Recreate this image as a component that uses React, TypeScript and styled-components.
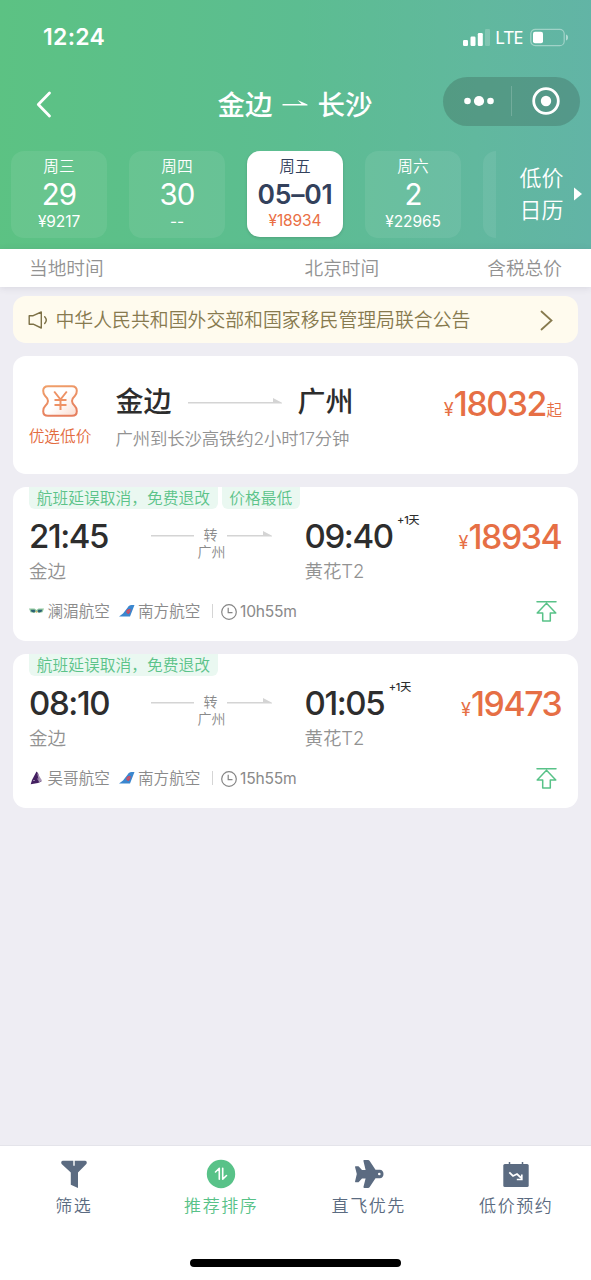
import React from 'react';
import styled, { createGlobalStyle, css } from 'styled-components';

const GlobalStyle = createGlobalStyle`
  *, *::before, *::after { box-sizing: border-box; }
  body {
    margin: 0;
    background: #eeedf3;
    font-family: Inter, "Noto Sans CJK SC", sans-serif;
    color: #2d2d2d;
  }
  svg { display: block; flex: none; }
`;

const Screen = styled.div`
  width: 591px;
  height: 1280px;
  display: flex;
  flex-direction: column;
  overflow: hidden;
  background: #eeedf3;
  white-space: nowrap;
`;

/* ---------- header ---------- */

const Header = styled.header`
  height: 249px;
  flex: none;
  background: linear-gradient(92deg, #5cc283 0%, #5cbd91 50%, #61b89e 80%, #62b4a6 100%);
  color: #fff;
`;

const StatusBar = styled.div`
  height: 74px;
  padding: 0 23px 0 43px;
  display: flex;
  align-items: center;
  justify-content: space-between;
`;

const Clock = styled.span`
  font-size: 23px;
  font-weight: 600;
  line-height: 28px;
  letter-spacing: 0.3px;
`;

const StatusIcons = styled.div`
  display: flex;
  align-items: center;
`;

const Network = styled.span`
  width: 29px;
  margin: 0 6px 0 5px;
  font-family: "Noto Sans", sans-serif;
  font-size: 18.2px;
  font-weight: 450;
  line-height: 24px;
  letter-spacing: -0.5px;
`;

const NavBar = styled.div`
  height: 77px;
  display: grid;
  grid-template-columns: 217.5px 1fr 148px;
  align-items: start;
`;

const BackSlot = styled.div`
  padding: 17px 0 0 36px;
`;

const NavTitle = styled.h1`
  margin: 11px 0 0;
  display: flex;
  align-items: center;
  gap: 9.5px;
  font-size: 27.5px;
  font-weight: 500;
  line-height: 40px;
`;

const Capsule = styled.div`
  width: 137px;
  height: 49px;
  margin-top: 2.5px;
  border-radius: 25px;
  background: rgba(50, 80, 70, 0.28);
  display: grid;
  grid-template-columns: 1fr 1px 1fr;
  align-items: center;
  justify-items: center;
`;

const DotsSlot = styled.span`
  margin-left: 4px;
`;

const CapsuleRule = styled.span`
  width: 1px;
  height: 30px;
  background: rgba(255, 255, 255, 0.18);
`;

const DateStrip = styled.div`
  height: 98px;
  padding-left: 11px;
  display: flex;
`;

const DateList = styled.div`
  width: 485px;
  flex: none;
  overflow: hidden;
  display: flex;
  gap: 22px;
`;

const DateCard = styled.div<{ $active?: boolean }>`
  width: 96px;
  height: 87px;
  flex: none;
  border-radius: 13px;
  background: rgba(255, 255, 255, 0.075);
  display: flex;
  flex-direction: column;
  align-items: center;
  ${(p) =>
    p.$active &&
    css`
      height: 86px;
      background: #fff;
      color: #33415c;
      box-shadow: 0 1px 3px rgba(0, 0, 0, 0.15);
    `}
`;

const Weekday = styled.span`
  margin-top: 5px;
  font-size: 15.7px;
  font-weight: 350;
  line-height: 22px;
`;

const DayNumber = styled.span<{ $active?: boolean }>`
  font-size: ${(p) => (p.$active ? '26.5px' : '29.5px')};
  font-weight: ${(p) => (p.$active ? 570 : 370)};
  line-height: 33px;
  letter-spacing: ${(p) => (p.$active ? '-0.2px' : '-0.8px')};
`;

const DayPrice = styled.span<{ $active?: boolean }>`
  font-size: 15.5px;
  line-height: 20px;
  letter-spacing: -0.1px;
  color: ${(p) => (p.$active ? '#ea6f45' : 'inherit')};
  margin-top: ${(p) => (p.$active ? '0' : '1px')};
`;

const CalendarLink = styled.div`
  flex: 1;
  display: flex;
  align-items: center;
  gap: 10px;
  height: 86px;
  padding-left: 23.5px;
  font-size: 22px;
  font-weight: 350;
  line-height: 32px;
`;

/* ---------- list heading ---------- */

const ColumnHeads = styled.div`
  height: 38px;
  flex: none;
  padding: 1px 29px 0;
  background: #fff;
  box-shadow: 0 1px 7px rgba(60, 60, 90, 0.12);
  display: grid;
  grid-template-columns: 275.5px 1fr auto;
  align-items: center;
  font-size: 18.7px;
  line-height: 36px;
  font-weight: 350;
  color: #929292;
`;

const List = styled.main`
  flex: 1;
  padding: 9px 13px 0;
  display: flex;
  flex-direction: column;
  gap: 13px;
`;

const Notice = styled.div`
  height: 47px;
  flex: none;
  padding: 1px 25px 0 15px;
  border-radius: 13px;
  background: #fffbee;
  color: #877a4e;
  display: flex;
  align-items: center;
`;

const NoticeText = styled.span`
  flex: 1;
  margin-left: 7.5px;
  padding-top: 1px;
  font-size: 18.87px;
  font-weight: 350;
  line-height: 28px;
`;

const cardBase = css`
  flex: none;
  border-radius: 13px;
  background: #fff;
`;

/* ---------- recommended deal ---------- */

const DealCard = styled.section`
  ${cardBase}
  height: 118px;
  padding: 27px 16px 0;
  display: grid;
  grid-template-columns: 86.5px 1fr auto;
  align-items: start;
`;

const DealBadge = styled.div`
  width: 62px;
  padding-top: 2px;
  display: flex;
  flex-direction: column;
  align-items: center;
  gap: 9px;
  font-size: 15.7px;
  font-weight: 350;
  line-height: 22px;
  color: #e36b40;
`;

const DealRoute = styled.div`
  display: flex;
  align-items: center;
  gap: 16px;
  font-size: 28px;
  font-weight: 500;
  line-height: 38px;
`;

const DealNote = styled.div`
  margin-top: 6px;
  font-size: 17.4px;
  font-weight: 350;
  line-height: 24px;
  letter-spacing: -0.15px;
  color: #929292;
`;

const Price = styled.div`
  display: flex;
  align-items: baseline;
  justify-content: flex-end;
  color: #e66f45;
  font-size: 18px;
  line-height: 42px;
`;

const Amount = styled.span`
  font-size: 33.8px;
  font-weight: 550;
  letter-spacing: -1.4px;
  margin-right: 0.6px;
`;

const PriceSuffix = styled.span`
  font-size: 15.5px;
  font-weight: 350;
`;

/* ---------- flights ---------- */

const FlightCard = styled.section`
  ${cardBase}
  height: 154px;
  padding: 0 16px;
`;

const Tags = styled.div`
  height: 22px;
  display: flex;
  gap: 4px;
`;

const Tag = styled.span`
  height: 22px;
  padding: 0 7.7px;
  border-radius: 0 0 6px 6px;
  background: #eaf8f1;
  color: #5bc389;
  font-size: 15.75px;
  font-weight: 350;
  line-height: 23px;
`;

const FlightRow = styled.div`
  height: 76px;
  padding-top: 7px;
  display: grid;
  grid-template-columns: 122px 153.5px 1fr auto;
  align-items: start;
`;

const TimeLine = styled.div`
  display: flex;
  align-items: flex-start;
  gap: 4.5px;
`;

const Time = styled.span`
  font-size: 33px;
  font-weight: 540;
  line-height: 40px;
  letter-spacing: -1.4px;
`;

const NextDay = styled.sup`
  font-size: 11px;
  font-weight: 500;
  line-height: 16px;
  letter-spacing: -0.2px;
  margin-top: -4px;
`;

const Place = styled.div`
  margin-top: 2px;
  font-size: 18.5px;
  font-weight: 350;
  line-height: 26px;
  letter-spacing: -0.1px;
  color: #929292;
`;

const Transfer = styled.div`
  width: 121px;
  padding-top: 10px;
  display: flex;
  flex-direction: column;
  align-items: center;
  font-size: 14px;
  line-height: 17px;
  font-weight: 350;
  color: #8a8a8a;
`;

const TransferLine = styled.div`
  width: 100%;
  display: flex;
  align-items: center;
  justify-content: space-between;
`;

const FlightPrice = styled(Price)`
  margin-top: -0.5px;
`;

const FlightFoot = styled.div`
  height: 52px;
  padding: 1px 5px 0 0;
  display: flex;
  align-items: center;
  font-size: 15.6px;
  font-weight: 350;
  line-height: 24px;
  color: #8a8a8a;
`;

const Airline = styled.span`
  display: flex;
  align-items: center;
  gap: 3.5px;
  width: 89.5px;
`;

const Duration = styled.span`
  flex: 1;
  display: flex;
  align-items: center;
  gap: 3px;
  padding-left: 8px;
  font-weight: 380;
  letter-spacing: -0.2px;
`;

const FootRule = styled.span`
  width: 1px;
  height: 14px;
  margin: 0 0 2px 4px;
  background: #d5d5d5;
`;

/* ---------- bottom bar ---------- */

const BottomBar = styled.nav`
  height: 135px;
  flex: none;
  border-top: 1px solid #e4e4ea;
  background: #fff;
  display: flex;
  flex-direction: column;
  align-items: center;
  justify-content: space-between;
  padding-bottom: 13px;
`;

const TabRow = styled.div`
  width: 100%;
  padding-right: 1px;
  display: grid;
  grid-template-columns: repeat(4, 1fr);
`;

const Tab = styled.div<{ $active?: boolean }>`
  padding-top: 13px;
  display: flex;
  flex-direction: column;
  align-items: center;
  gap: 4px;
  font-size: 17px;
  font-weight: 350;
  line-height: 26px;
  letter-spacing: 1.6px;
  color: ${(p) => (p.$active ? '#58c288' : '#5b6b81')};
`;

const HomeIndicator = styled.div`
  width: 211px;
  height: 8px;
  border-radius: 4px;
  background: #000;
`;

/* ---------- drawings ---------- */

const SignalIcon = () => (
  <svg width="27" height="17" viewBox="0 0 27 17" fill="#fff">
    <rect x="0" y="11" width="5" height="6" rx="1.2" />
    <rect x="7.5" y="7.5" width="5" height="9.5" rx="1.2" />
    <rect x="14.8" y="4" width="5" height="13" rx="1.2" />
    <rect x="22" y="0" width="5" height="17" rx="1.2" opacity="0.2" />
  </svg>
);

const BatteryIcon = () => (
  <svg width="38" height="19" viewBox="0 0 38 19">
    <rect x="0.8" y="1.3" width="33.4" height="16.4" rx="4.5" fill="none" stroke="#fff" strokeOpacity="0.4" strokeWidth="1.2" />
    <rect x="3" y="3.8" width="10" height="11.4" rx="2" fill="#fff" />
    <path d="M36 6.5c1.6.6 2 1.7 2 3s-.4 2.4-2 3z" fill="#fff" opacity="0.5" />
  </svg>
);

const BackIcon = () => (
  <svg width="16" height="27" viewBox="0 0 16 27" fill="none" stroke="#fff" strokeWidth="2.8" strokeLinecap="round" strokeLinejoin="round">
    <path d="M13.5 2 2.3 13.5 13.5 25" />
  </svg>
);

const TitleArrow = () => (
  <svg width="26" height="10" viewBox="0 0 26 10">
    <path d="M.5 5.5V4h19L15.5 0 25.5 4.5V5.5z" fill="#fff" />
  </svg>
);

const DotsIcon = () => (
  <svg width="30" height="12" viewBox="0 0 30 12" fill="#fff">
    <circle cx="3.5" cy="6" r="3.3" />
    <circle cx="15" cy="6" r="5.1" />
    <circle cx="26.5" cy="6" r="3.3" />
  </svg>
);

const TargetIcon = () => (
  <svg width="28" height="28" viewBox="0 0 28 28">
    <circle cx="14" cy="14" r="12.3" fill="none" stroke="#fff" strokeWidth="2.8" />
    <circle cx="14" cy="14" r="5.2" fill="#fff" />
  </svg>
);

const PlayIcon = () => (
  <svg width="8" height="14" viewBox="0 0 8 14">
    <path d="M0 .5 8 7 0 13.5z" fill="#fff" />
  </svg>
);

const SpeakerIcon = () => (
  <svg width="20" height="18" viewBox="0 0 20 18" fill="none" stroke="#7d7146" strokeWidth="1.4" strokeLinejoin="round" strokeLinecap="round">
    <path d="M1.2 4.7h4L13.3 1v16L5.2 13.2h-4z" />
    <path d="M16.7 5.7c1.9 2 1.9 4.7 0 6.7" />
  </svg>
);

const ChevronIcon = () => (
  <svg width="13" height="21" viewBox="0 0 13 21" fill="none" stroke="#877a4e" strokeWidth="1.8" strokeLinecap="round">
    <path d="M1.5 1.5 11.5 10.5 1.5 19.5" />
  </svg>
);

const TicketIcon = () => (
  <svg width="36" height="32" viewBox="0 0 36 32">
    <defs>
      <linearGradient id="ticketStroke" x1="0" y1="0" x2="0.3" y2="1">
        <stop offset="0" stopColor="#f0a06a" />
        <stop offset="1" stopColor="#e67f5e" />
      </linearGradient>
      <linearGradient id="ticketFill" x1="0" y1="0" x2="1" y2="1">
        <stop offset="0.5" stopColor="#fff" />
        <stop offset="1" stopColor="#fbdccf" />
      </linearGradient>
    </defs>
    <path
      d="M6 1.2h24c3 0 4.8 1.8 4.8 4.6 0 2-.4 3.6-1.8 4.9-2.2 2-3 3.3-3 5.3s.8 3.3 3 5.3c1.4 1.3 1.8 2.9 1.8 4.900 0 2.800-1.800 4.600-4.800 4.600H6c-3 0-4.800-1.800-4.800-4.600 0-2 .4-3.600 1.800-4.900 2.200-2 3-3.300 3-5.300s-.8-3.300-3-5.300C1.600 9.400 1.200 7.800 1.200 5.800 1.200 3 3 1.200 6 1.200z"
      fill="url(#ticketFill)"
      stroke="url(#ticketStroke)"
      strokeWidth="2"
    />
    <path d="M12.2 6.5 18.5 14.5 24.8 6.5M18.5 14.5V25M12.5 15h12M12.5 20h12" fill="none" stroke="#ee9265" strokeWidth="2" />
  </svg>
);

const LongArrow = ({ width }: { width: number }) => (
  <svg width={width} height="8" viewBox={`0 0 ${width} 8`} fill="#d4d4d4">
    <path d={`M0 4h${width - 9}V0L${width} 4.8V5.5H0z`} />
  </svg>
);

const ShortLine = () => (
  <svg width="43" height="8" viewBox="0 0 43 8">
    <rect y="4" width="43" height="1.5" fill="#d4d4d4" />
  </svg>
);

const LanmeiLogo = () => (
  <svg width="15" height="16" viewBox="0 0 15 16">
    <path d="M0 4.5h5.5l2 1.5 2-1.5H15l-1.500 3.800-4 .7-2-1.800-2 1.800-4-.7z" fill="#8fc79e" />
    <path d="M1.800 5.800h3.700l1 1.500-1.500 1.200-2.500-.7zM13.200 5.800H9.500l-1 1.500L10 8.500l2.500-.7z" fill="#2c6175" />
    <circle cx="7.5" cy="7.8" r="0.9" fill="#d8b060" />
  </svg>
);

const AngkorLogo = () => (
  <svg width="15" height="16" viewBox="0 0 15 16">
    <path d="M7.5.5 9 2l1.500 5 2 3.500L9 12l-7.300 1.200L3 9z" fill="#431f60" />
    <path d="M8 1.500 13 9.500l-3 2.300L9 6z" fill="#a895b4" />
    <path d="M4 9.500h2M8.500 7.500l1 2" stroke="#e6dcea" strokeWidth="0.5" />
  </svg>
);

const SouthernLogo = () => (
  <svg width="16" height="14" viewBox="0 0 16 14">
    <path d="M0 11.500h11L15.500 0H12.500C10.500 0 9.700 1 8.500 2.800L4 8.500z" fill="#3b87cf" />
    <path d="M7.300 6.500c1-2.300 2.700-2.800 4.400-2.200l-.5 2.400-1.500 2.200-1.900-.6z" fill="#d8455a" />
    <path d="M8 7 11 5.500" stroke="#7d8aa8" strokeWidth="0.600" />
  </svg>
);

const DurationIcon = () => (
  <svg width="16" height="16" viewBox="0 0 16 16" fill="none" stroke="#858585" strokeWidth="1.200">
    <circle cx="8" cy="8" r="7.300" />
    <path d="M7.200 3.700v5h4.300" />
  </svg>
);

const PinTopIcon = () => (
  <svg width="21" height="22" viewBox="0 0 21 22" fill="none" stroke="#58c288" strokeWidth="1.500" strokeLinejoin="round" strokeLinecap="round">
    <path d="M1 .8h19M10.500 2.300 1.200 12h5.500v8h7.600v-8h5.500z" />
  </svg>
);

const FilterIcon = () => (
  <svg width="26" height="30" viewBox="0 0 26 30">
    <path d="M1.800 1.800h10.500v5h1.400v-5h10.500c1.500 0 2.200 2.200.9 3.400L17 13.500V29l-7.200-3.300V13.500L.9 5.200C-.4 4 .3 1.800 1.800 1.800z" fill="#5b6b81" />
  </svg>
);

const SortIcon = () => (
  <svg width="30" height="30" viewBox="0 0 30 30">
    <circle cx="15" cy="15" r="14.200" fill="#58c288" />
    <path d="M9.500 13 13.300 9.300V20.300M16.700 9.300v10.900L20.500 16.500" fill="none" stroke="#fff" strokeWidth="1.600" strokeLinecap="round" strokeLinejoin="round" />
  </svg>
);

const PlaneIcon = () => (
  <svg width="30" height="30" viewBox="0 0 30 30">
    <path
      d="M10.300 1h3.700c.8 0 1.300.4 1.700 1l5.800 8.800h4.300c2.300 0 3.700 1.800 3.700 4.200s-1.400 4.200-3.700 4.200h-4.300L15.700 28c-.4.600-.9 1-1.700 1h-3.700c-.7 0-1-.5-.8-1.200l2.100-8.300H8l-3 3.300c-.3.400-.7.500-1.200.5H1.800c-.6 0-.9-.5-.7-1.100L2.800 15 1.100 8.300c-.2-.6.100-1.100.7-1.100h2c.5 0 .9.100 1.200.5l3 3.300h3.600L9.500 2.200C9.300 1.500 9.600 1 10.300 1z"
      fill="#5b6b81"
    />
    <circle cx="25.300" cy="15" r="1.300" fill="#fff" />
  </svg>
);

const BookingIcon = () => (
  <svg width="26" height="30" viewBox="0 0 26 30">
    <rect x="0.300" y="5" width="25.400" height="23" rx="1.500" fill="#5b6b81" />
    <path d="M6.500 3v3M19.500 3v3" stroke="#5b6b81" strokeWidth="1.500" />
    <path d="M6.300 13.300 10 17l4-2 4.300 4" fill="none" stroke="#fff" strokeWidth="1.800" />
    <path d="M18.800 15.500v5h-5" fill="none" stroke="#fff" strokeWidth="1.700" />
  </svg>
);

/* ---------- data ---------- */

const dates = [
  { week: '周三', day: '29', price: '¥9217' },
  { week: '周四', day: '30', price: '--' },
  { week: '周五', day: '05–01', price: '¥18934', active: true },
  { week: '周六', day: '2', price: '¥22965' },
  { week: '', day: '', price: '' },
];

const flights = [
  {
    tags: ['航班延误取消，免费退改', '价格最低'],
    depart: '21:45',
    arrive: '09:40',
    price: '18934',
    logo: <LanmeiLogo />,
    airline: '澜湄航空',
    duration: '10h55m',
  },
  {
    tags: ['航班延误取消，免费退改'],
    depart: '08:10',
    arrive: '01:05',
    price: '19473',
    logo: <AngkorLogo />,
    airline: '吴哥航空',
    duration: '15h55m',
  },
];

const tabs = [
  { label: '筛选', icon: <FilterIcon /> },
  { label: '推荐排序', icon: <SortIcon />, active: true },
  { label: '直飞优先', icon: <PlaneIcon /> },
  { label: '低价预约', icon: <BookingIcon /> },
];

export default function App() {
  return (
    <>
      <GlobalStyle />
      <Screen>
        <Header>
          <StatusBar>
            <Clock>12:24</Clock>
            <StatusIcons>
              <SignalIcon />
              <Network>LTE</Network>
              <BatteryIcon />
            </StatusIcons>
          </StatusBar>
          <NavBar>
            <BackSlot>
              <BackIcon />
            </BackSlot>
            <NavTitle>
              <span>金边</span>
              <TitleArrow />
              <span>长沙</span>
            </NavTitle>
            <Capsule>
              <DotsSlot>
                <DotsIcon />
              </DotsSlot>
              <CapsuleRule />
              <TargetIcon />
            </Capsule>
          </NavBar>
          <DateStrip>
            <DateList>
              {dates.map((d, i) => (
                <DateCard key={i} $active={d.active}>
                  <Weekday>{d.week}</Weekday>
                  <DayNumber $active={d.active}>{d.day}</DayNumber>
                  <DayPrice $active={d.active}>{d.price}</DayPrice>
                </DateCard>
              ))}
            </DateList>
            <CalendarLink>
              <span>
                低价
                <br />
                日历
              </span>
              <PlayIcon />
            </CalendarLink>
          </DateStrip>
        </Header>

        <ColumnHeads>
          <span>当地时间</span>
          <span>北京时间</span>
          <span>含税总价</span>
        </ColumnHeads>

        <List>
          <Notice>
            <SpeakerIcon />
            <NoticeText>中华人民共和国外交部和国家移民管理局联合公告</NoticeText>
            <ChevronIcon />
          </Notice>

          <DealCard>
            <DealBadge>
              <TicketIcon />
              优选低价
            </DealBadge>
            <div>
              <DealRoute>
                <span>金边</span>
                <LongArrow width={94} />
                <span>广州</span>
              </DealRoute>
              <DealNote>广州到长沙高铁约2小时17分钟</DealNote>
            </div>
            <Price>
              ¥<Amount>18032</Amount>
              <PriceSuffix>起</PriceSuffix>
            </Price>
          </DealCard>

          {flights.map((f) => (
            <FlightCard key={f.depart}>
              <Tags>
                {f.tags.map((t) => (
                  <Tag key={t}>{t}</Tag>
                ))}
              </Tags>
              <FlightRow>
                <div>
                  <Time>{f.depart}</Time>
                  <Place>金边</Place>
                </div>
                <Transfer>
                  <TransferLine>
                    <ShortLine />
                    <span>转</span>
                    <LongArrow width={45} />
                  </TransferLine>
                  <span>广州</span>
                </Transfer>
                <div>
                  <TimeLine>
                    <Time>{f.arrive}</Time>
                    <NextDay>+1天</NextDay>
                  </TimeLine>
                  <Place>黄花T2</Place>
                </div>
                <FlightPrice>
                  ¥<Amount>{f.price}</Amount>
                </FlightPrice>
              </FlightRow>
              <FlightFoot>
                <Airline>
                  {f.logo}
                  {f.airline}
                </Airline>
                <Airline>
                  <SouthernLogo />
                  南方航空
                </Airline>
                <FootRule />
                <Duration>
                  <DurationIcon />
                  {f.duration}
                </Duration>
                <PinTopIcon />
              </FlightFoot>
            </FlightCard>
          ))}
        </List>

        <BottomBar>
          <TabRow>
            {tabs.map((t) => (
              <Tab key={t.label} $active={t.active}>
                {t.icon}
                {t.label}
              </Tab>
            ))}
          </TabRow>
          <HomeIndicator />
        </BottomBar>
      </Screen>
    </>
  );
}
